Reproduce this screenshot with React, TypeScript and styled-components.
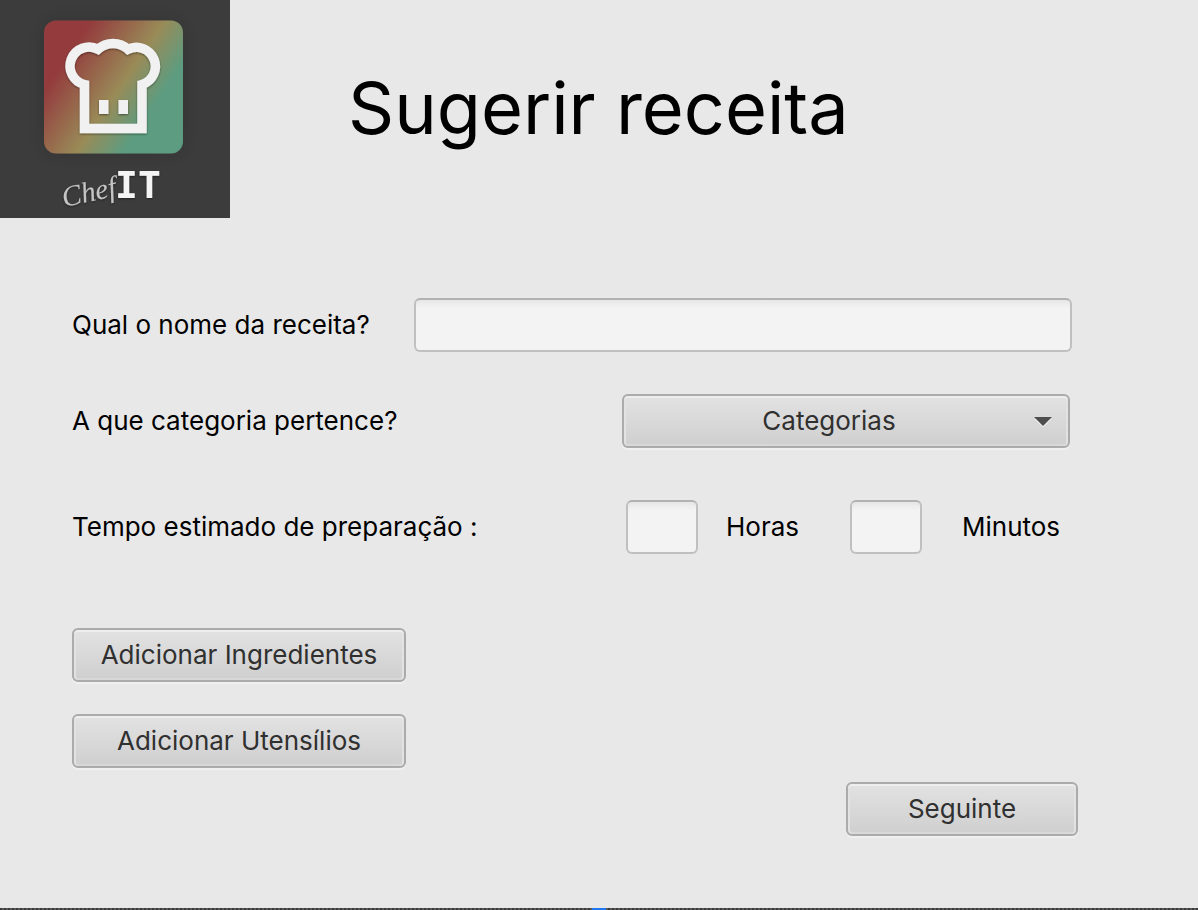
import React from "react";
import styled, { createGlobalStyle, css } from "styled-components";

const GlobalStyle = createGlobalStyle`
  *, *::before, *::after { box-sizing: border-box; }
  body {
    margin: 0;
    background: #e8e8e8;
    color: #000;
    font-family: Inter, "Liberation Sans", sans-serif;
    font-size: 26px;
    line-height: 32px;
  }
`;

const Page = styled.div`
  min-height: 100vh;
  display: flex;
  flex-direction: column;
`;

const Header = styled.header`
  display: flex;
  align-items: center;
`;

const LogoPanel = styled.div`
  flex: none;
  width: 230px;
  height: 218px;
  background: #3c3c3c;

  svg { display: block; }
`;

const Title = styled.h1`
  margin: 0 0 0 118px;
  padding-bottom: 2px;
  font-size: 72px;
  line-height: 88px;
  font-weight: 400;
`;

const Form = styled.form`
  display: flex;
  flex-direction: column;
  padding: 80px 120px 72px 72px;
`;

const Row = styled.div<{ $label: number; $gap: number; $end?: number }>`
  display: grid;
  grid-template-columns: ${(p) => p.$label}px 1fr;
  align-items: center;
  margin-bottom: ${(p) => p.$gap}px;
  padding-right: ${(p) => p.$end ?? 0}px;
`;

const fieldShape = css`
  height: 54px;
  border-radius: 6px;
  font: inherit;
`;

const raised = css`
  ${fieldShape}
  border: 2px solid #ababab;
  background: linear-gradient(#e2e2e2, #cfcfcf);
  box-shadow: inset 0 2px #eeeeee, inset 2px 0 #e2e2e2, inset -2px 0 #e2e2e2,
    inset 0 -2px #d8d8d8, 0 2px #f0f0f0;
  color: #303030;
  cursor: pointer;
`;

const TextField = styled.input<{ $width?: number }>`
  ${fieldShape}
  width: ${(p) => (p.$width ? `${p.$width}px` : "100%")};
  padding: 0 12px;
  border: 2px solid #c0c0c0;
  border-top-color: #b2b2b2;
  background: linear-gradient(#e6e6e6, #f3f3f3 8px);
`;

const SelectBox = styled.div`
  position: relative;
`;

const Select = styled.select`
  ${raised}
  appearance: none;
  display: block;
  width: 100%;
  padding: 0 34px 0 0;
  text-align: center;
  text-align-last: center;
`;

const Arrow = styled.svg`
  position: absolute;
  right: 17px;
  top: 22px;
  pointer-events: none;
`;

const Duration = styled.div`
  display: flex;
  align-items: center;
  padding-left: 4px;
`;

const Unit = styled.label<{ $width: number }>`
  width: ${(p) => p.$width}px;
  padding-left: 28px;
`;

const LastUnit = styled.label`
  padding-left: 40px;
`;

const Actions = styled.div`
  display: flex;
  flex-direction: column;
  align-items: flex-start;
  gap: 32px;
`;

const Button = styled.button<{ $width: number }>`
  ${raised}
  width: ${(p) => p.$width}px;
  padding: 0;
`;

const Footer = styled.div`
  display: flex;
  justify-content: flex-end;
  margin-top: 14px;
`;

const Strip = styled.div`
  display: flex;
  justify-content: center;
  height: 2px;
  margin-top: auto;
  background: repeating-linear-gradient(90deg, #3a3a3a 0 2px, #5a5a5a 2px 4px);
`;

const StripMark = styled.span`
  width: 14px;
  background: #1f78f0;
`;

function Logo() {
  return (
    <svg width="230" height="218" viewBox="0 0 230 218" role="img" aria-label="ChefIT">
      <defs>
        <linearGradient id="tile" gradientUnits="userSpaceOnUse" x1="72" y1="49" x2="155" y2="105">
          <stop offset="0" stopColor="#943b3d" />
          <stop offset="0.61" stopColor="#998b58" />
          <stop offset="1" stopColor="#5d9c80" />
        </linearGradient>
        <filter id="soft" x="-20%" y="-20%" width="140%" height="140%">
          <feDropShadow dx="0" dy="1" stdDeviation="1" floodColor="#000" floodOpacity="0.45" />
        </filter>
        <filter id="halo" x="-30%" y="-30%" width="160%" height="160%">
          <feDropShadow dx="0" dy="0" stdDeviation="10" floodColor="#000" floodOpacity="0.15" />
        </filter>
      </defs>
      <rect x="44" y="20.500" width="139" height="133" rx="12" fill="url(#tile)" filter="url(#halo)" />
      <g filter="url(#soft)">
        <path
          d="M84.500 128.500V84.500A19 19 0 1 1 98 49.300A22 22 0 0 1 128 49.300A19 19 0 1 1 142 84.500V128.500Z"
          fill="none"
          stroke="#f1f1f1"
          strokeWidth="9.500"
        />
        <path d="M99 100h9.500v14H99zM118.500 100h9.500v14h-9.500z" fill="#f1f1f1" />
      </g>
      <g filter="url(#soft)">
        <text
          x="64"
          y="207"
          transform="rotate(-12 64 207)"
          fill="#c4c4c4"
          fontFamily="'Liberation Serif', serif"
          fontStyle="italic"
          fontSize="29"
        >
          Chef
        </text>
        <text
          x="115"
          y="198"
          fill="#f4f4f4"
          fontFamily="'DejaVu Sans Mono', monospace"
          fontWeight="700"
          fontSize="38"
        >
          IT
        </text>
      </g>
    </svg>
  );
}

export default function App() {
  return (
    <Page>
      <GlobalStyle />
      <Header>
        <LogoPanel>
          <Logo />
        </LogoPanel>
        <Title>Sugerir receita</Title>
      </Header>
      <Form onSubmit={(e) => e.preventDefault()}>
        <Row $label={342} $gap={42} $end={6}>
          <label htmlFor="nome">Qual o nome da receita?</label>
          <TextField id="nome" type="text" />
        </Row>
        <Row $label={550} $gap={52} $end={8}>
          <label htmlFor="categoria">A que categoria pertence?</label>
          <SelectBox>
            <Select id="categoria" defaultValue="">
              <option value="">Categorias</option>
            </Select>
            <Arrow width="20" height="12" viewBox="0 0 20 12" aria-hidden="true">
              <path d="M1 2.500H19L10 11.500Z" fill="#f0f0f0" />
              <path d="M1 1H19L10 10Z" fill="#4e4e4e" />
            </Arrow>
          </SelectBox>
        </Row>
        <Row $label={550} $gap={74}>
          <span>Tempo estimado de preparação :</span>
          <Duration>
            <TextField id="horas" type="text" inputMode="numeric" $width={72} />
            <Unit htmlFor="horas" $width={152}>Horas</Unit>
            <TextField id="minutos" type="text" inputMode="numeric" $width={72} />
            <LastUnit htmlFor="minutos">Minutos</LastUnit>
          </Duration>
        </Row>
        <Actions>
          <Button type="button" $width={334}>Adicionar Ingredientes</Button>
          <Button type="button" $width={334}>Adicionar Utensílios</Button>
        </Actions>
        <Footer>
          <Button type="submit" $width={232}>Seguinte</Button>
        </Footer>
      </Form>
      <Strip>
        <StripMark />
      </Strip>
    </Page>
  );
}
